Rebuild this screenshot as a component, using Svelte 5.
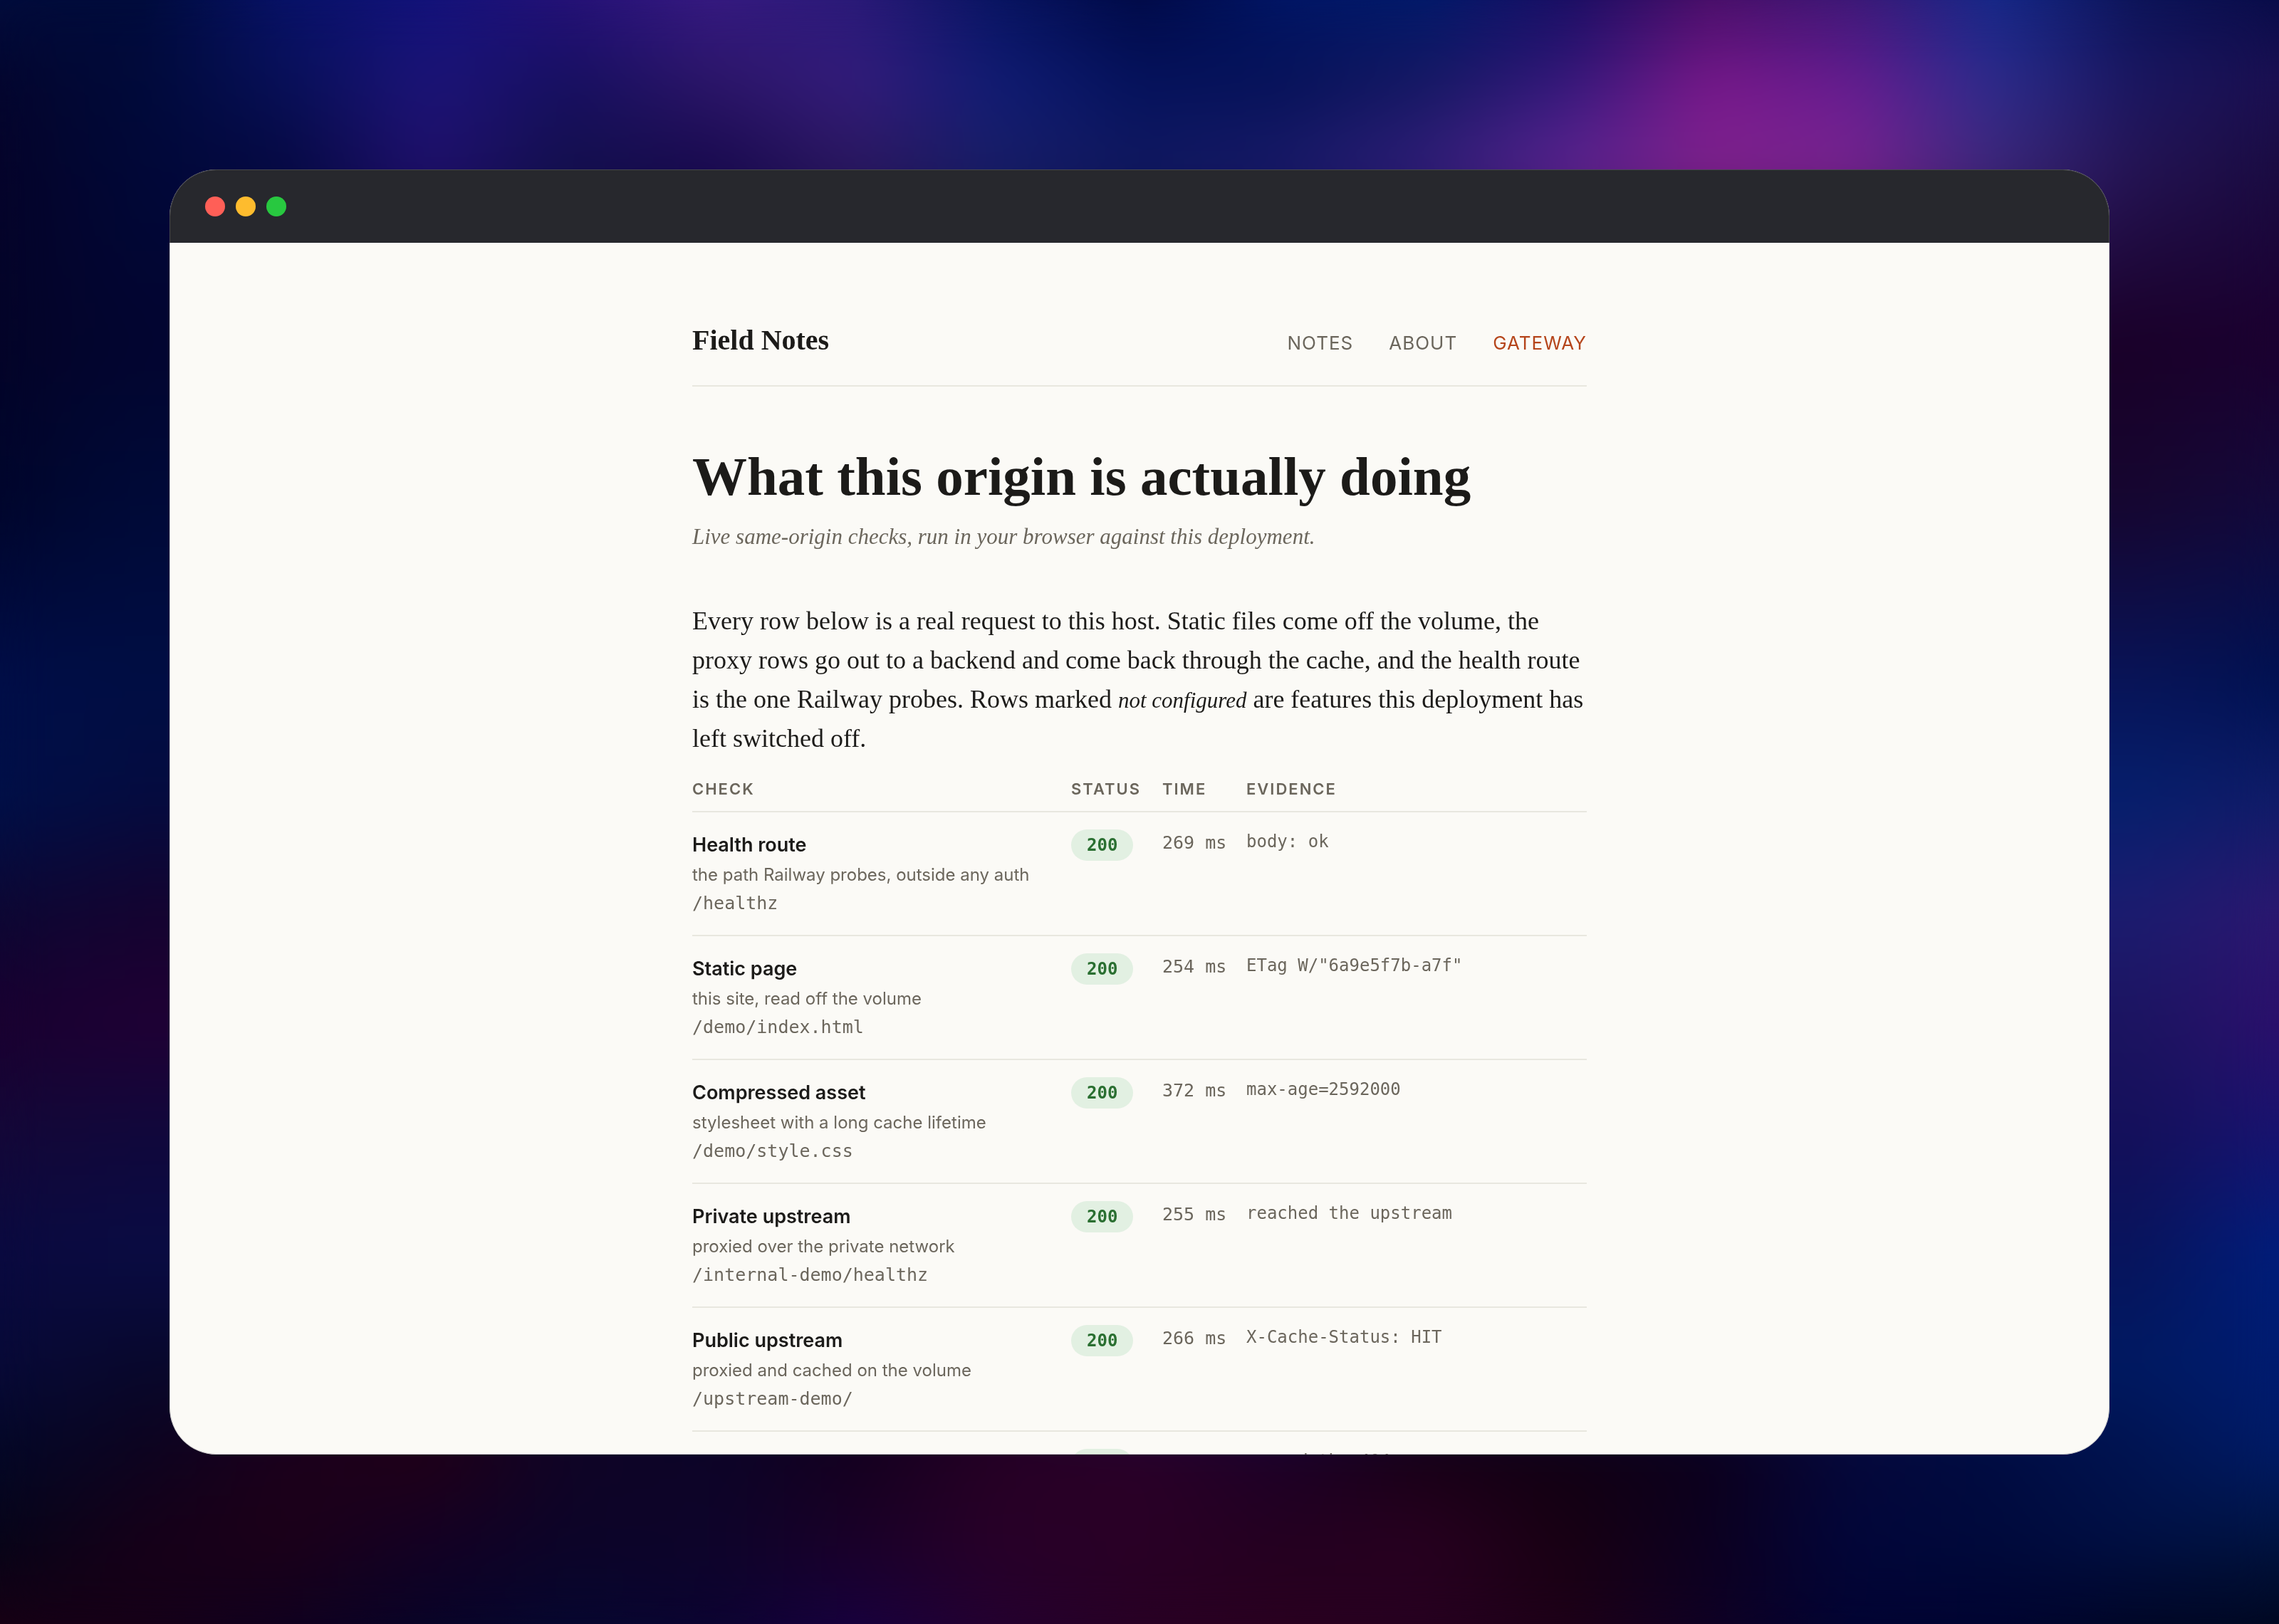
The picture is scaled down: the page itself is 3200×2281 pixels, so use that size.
<script>
  const checks = [
    { name: 'Health route', note: 'the path Railway probes, outside any auth', path: '/healthz', status: 200, time: '269 ms', evidence: 'body: ok' },
    { name: 'Static page', note: 'this site, read off the volume', path: '/demo/index.html', status: 200, time: '254 ms', evidence: 'ETag W/"6a9e5f7b-a7f"' },
    { name: 'Compressed asset', note: 'stylesheet with a long cache lifetime', path: '/demo/style.css', status: 200, time: '372 ms', evidence: 'max-age=2592000' },
    { name: 'Private upstream', note: 'proxied over the private network', path: '/internal-demo/healthz', status: 200, time: '255 ms', evidence: 'reached the upstream' },
    { name: 'Public upstream', note: 'proxied and cached on the volume', path: '/upstream-demo/', status: 200, time: '266 ms', evidence: 'X-Cache-Status: HIT' },
    { name: 'Error page', note: 'a missing path gets the custom page', path: '/demo/missing', status: 404, time: '267 ms', evidence: 'served the 404' }
  ];

  // Colour mesh behind the window: each row is a horizontal run of colours at
  // a height in percent, and fades into the row above it.
  const mesh = [
    [0, '020c3c 000c3c 081268 12127a 261278 371a82 2a1a78 081460 010a46 001666 001a6a 180e62 460e66 3a1874 142888 0c1458 080c48'],
    [5, '04062e 000a3a 081058 1c1478 160f60 2c1668 341c7c 101c74 04125c 061258 151862 34187a 78188a 661c90 2c2c8c 1a1660 1c1052'],
    [10, '06042a 000838 060a44 20106c 14104e 1a0a50 2c1860 181e68 101860 181a68 301e78 5a2490 80228e 782490 3c287c 241454 1a0c42'],
    [21, '040428 030530 030530 030530 030530 030530 030530 030530 030530 030530 030530 1a0028 1a0028 1a0028 1a0028 1a0028 1c0030'],
    [31, '00062c 000a38 000a38 000a38 000a38 000a38 000a38 000a38 160630 160630 160630 160630 160630 160630 160630 160630 140a3c'],
    [42, '000e48 000e44 000e44 000e44 000e44 000e44 000e44 000e44 081458 081458 081458 081458 081458 081458 081458 081458 001252'],
    [49, '001048 040c40 040c40 040c40 040c40 040c40 040c40 040c40 051f6c 051f6c 051f6c 051f6c 051f6c 051f6c 051f6c 051f6c 101c68'],
    [56, '0c0834 140430 140430 140430 140430 140430 140430 140430 1c1c70 1c1c70 1c1c70 1c1c70 1c1c70 1c1c70 1c1c70 1c1c70 2c1870'],
    [63, '1a0030 200034 200034 200034 200034 200034 200034 200034 1c1460 1c1460 1c1460 1c1460 1c1460 1c1460 1c1460 1c1460 2c106c'],
    [70, '140838 10083c 10083c 10083c 10083c 10083c 10083c 10083c 14105a 14105a 14105a 14105a 14105a 14105a 14105a 14105a 181470'],
    [77, '0a0a40 0a0c44 0a0c44 0a0c44 0a0c44 0a0c44 0a0c44 0a0c44 08145c 08145c 08145c 08145c 08145c 08145c 08145c 08145c 001e7c'],
    [84, '080a38 08082c 08082c 08082c 08082c 08082c 08082c 08082c 001a62 001a62 001a62 001a62 001a62 001a62 001a62 001a62 001c70'],
    [89, '040828 0c0420 1c001c 220016 100426 0c0428 14001e 260024 2a0028 1c0028 160014 100014 0c001c 06083a 000c42 001452 001c68'],
    [95, '060518 160018 1c0018 140024 0c0428 0e042a 1a0028 280028 2a0026 240020 280020 180012 0c0020 02063a 000a3c 001044 001440'],
    [100, '180014 160018 100020 080428 060830 0c0432 180040 240030 280024 2a0020 260020 1e0018 100024 020432 000430 000624 000820']
  ];

  const bands = mesh.map(([at, colours], i) => {
    const run = colours.split(' ').map((c) => '#' + c).join(', ');
    const from = i === 0 ? 0 : mesh[i - 1][0];
    return { run, top: from, fade: i === 0 ? 0 : ((at - from) / (100 - from)) * 100 };
  });
</script>

<main class="scene">
  <div class="backdrop" aria-hidden="true">
    {#each bands as band}
      <div
        class="band"
        style="top: {band.top}%; background-image: linear-gradient(to right, {band.run}); mask-image: linear-gradient(to bottom, transparent 0%, black {band.fade}%)"
      ></div>
    {/each}
    <div class="haze"></div>
  </div>

  <section class="window">
    <div class="titlebar">
      <button class="dot close" aria-label="Close"></button>
      <button class="dot minimise" aria-label="Minimise"></button>
      <button class="dot zoom" aria-label="Zoom"></button>
    </div>

    <div class="page">
      <div class="column">
        <header class="masthead">
          <a class="brand" href="#home">Field Notes</a>
          <nav class="links">
            <a href="#notes">NOTES</a>
            <a href="#about">ABOUT</a>
            <a class="current" href="#gateway" aria-current="page">GATEWAY</a>
          </nav>
        </header>

        <h1>What this origin is actually doing</h1>
        <p class="subtitle">Live same-origin checks, run in your browser against this deployment.</p>

        <p class="intro">
          Every row below is a real request to this host. Static files come off the volume, the proxy rows go out to a
          backend and come back through the cache, and the health route is the one Railway probes. Rows marked
          <em>not configured</em> are features this deployment has left switched off.
        </p>

        <table>
          <colgroup>
            <col class="col-check" />
            <col class="col-status" />
            <col class="col-time" />
            <col />
          </colgroup>
          <thead>
            <tr>
              <th scope="col">CHECK</th>
              <th scope="col">STATUS</th>
              <th scope="col">TIME</th>
              <th scope="col">EVIDENCE</th>
            </tr>
          </thead>
          <tbody>
            {#each checks as check}
              <tr>
                <td>
                  <div class="name">{check.name}</div>
                  <div class="note">{check.note}</div>
                  <code class="path">{check.path}</code>
                </td>
                <td><span class="badge">{check.status}</span></td>
                <td class="time">{check.time}</td>
                <td class="evidence">{check.evidence}</td>
              </tr>
            {/each}
          </tbody>
        </table>
      </div>
    </div>
  </section>
</main>

<style>
  :global(body) {
    margin: 0;
    background: #020428;
  }

  .scene {
    position: relative;
    box-sizing: border-box;
    height: 100vh;
    padding: 238px;
    display: flex;
    overflow: hidden;
    color: #1c1b19;
    font-family: Inter, 'Liberation Sans', sans-serif;
  }

  .backdrop {
    position: absolute;
    inset: 0;
  }

  .band,
  .haze {
    position: absolute;
    inset: 0;
  }

  .haze {
    backdrop-filter: blur(36px);
  }

  .window {
    position: relative;
    flex: 1;
    min-width: 0;
    display: flex;
    flex-direction: column;
    overflow: hidden;
    border-radius: 66px;
    background: #fbfaf6;
  }

  .window::after {
    content: '';
    position: absolute;
    inset: 0;
    border: 1px solid rgba(128, 128, 136, 0.35);
    border-radius: inherit;
    pointer-events: none;
  }

  .titlebar {
    flex: none;
    box-sizing: border-box;
    height: 103px;
    padding: 0 50px;
    display: flex;
    align-items: center;
    gap: 15px;
    background: #27282d;
  }

  .dot {
    width: 28px;
    height: 28px;
    padding: 0;
    border: 0;
    border-radius: 50%;
  }

  .close {
    background: #ff5f57;
  }

  .minimise {
    background: #febc2e;
  }

  .zoom {
    background: #28c840;
  }

  .page {
    flex: 1;
    min-height: 0;
    overflow-y: auto;
    scrollbar-width: none;
    padding: 112px 48px 0;
  }

  .column {
    max-width: 1256px;
    margin: 0 auto;
  }

  .masthead {
    display: flex;
    align-items: baseline;
    justify-content: space-between;
    padding-bottom: 38px;
    border-bottom: 2px solid #e8e7df;
  }

  a {
    text-decoration: none;
    color: inherit;
  }

  .brand,
  h1,
  .subtitle,
  .intro {
    font-family: 'Liberation Serif', 'Times New Roman', serif;
  }

  .brand {
    font-size: 40px;
    line-height: 50px;
    font-weight: 700;
  }

  .links {
    display: flex;
    gap: 50px;
    font-size: 26px;
    line-height: 40px;
    letter-spacing: 1px;
    color: #6b665c;
  }

  .current {
    color: #b5451b;
  }

  h1 {
    margin: 80px 0 0;
    font-size: 77px;
    line-height: 92px;
    font-weight: 700;
  }

  .subtitle {
    margin: 12px 0 0;
    font-size: 31px;
    line-height: 54px;
    font-style: italic;
    color: #6b665c;
  }

  .intro {
    margin: 64px 0 0;
    font-size: 36px;
    line-height: 55px;
  }

  .intro em {
    font-size: 31px;
    line-height: 1;
  }

  table {
    width: 100%;
    margin-top: 14px;
    border-collapse: collapse;
    table-layout: fixed;
  }

  .col-check {
    width: 532px;
  }

  .col-status {
    width: 128px;
  }

  .col-time {
    width: 118px;
  }

  th {
    padding: 11px 0 13px;
    font-size: 22px;
    line-height: 36px;
    font-weight: 600;
    letter-spacing: 2px;
    text-align: left;
    color: #6b665c;
  }

  tr {
    border-bottom: 2px solid #e8e7df;
  }

  td {
    padding: 24px 0;
    vertical-align: top;
  }

  .name {
    font-size: 27px;
    line-height: 44px;
    font-weight: 600;
  }

  .note {
    font-size: 24px;
    line-height: 40px;
    color: #6b665c;
  }

  code,
  .time,
  .evidence,
  .badge {
    font-family: 'DejaVu Sans Mono', 'Liberation Mono', monospace;
    font-size: 24px;
    color: #6b665c;
  }

  .path {
    display: block;
    font-size: 25px;
    line-height: 40px;
  }

  .badge {
    display: inline-block;
    padding: 0 22px;
    border-radius: 22px;
    line-height: 44px;
    font-weight: 700;
    color: #2a6f31;
    background: #e2f0e2;
  }

  .time {
    font-size: 25px;
    line-height: 38px;
  }

  .evidence {
    line-height: 34px;
  }
</style>
